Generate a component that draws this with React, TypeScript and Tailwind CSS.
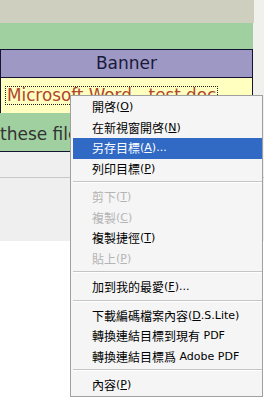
import React from "react";

type Item =
  | { sep: true }
  | {
      sep?: false;
      cjk: string;
      pre?: string;
      key?: string;
      post?: string;
      tail?: string;
      disabled?: boolean;
      active?: boolean;
    };

const items: Item[] = [
  { cjk: "開啓", pre: "(", key: "O", post: ")" },
  { cjk: "在新視窗開啓", pre: "(", key: "N", post: ")" },
  { cjk: "另存目標", pre: "(", key: "A", post: ")...", active: true },
  { cjk: "列印目標", pre: "(", key: "P", post: ")" },
  { sep: true },
  { cjk: "剪下", pre: "(", key: "T", post: ")", disabled: true },
  { cjk: "複製", pre: "(", key: "C", post: ")", disabled: true },
  { cjk: "複製捷徑", pre: "(", key: "T", post: ")" },
  { cjk: "貼上", pre: "(", key: "P", post: ")", disabled: true },
  { sep: true },
  { cjk: "加到我的最愛", pre: "(", key: "F", post: ")..." },
  { sep: true },
  { cjk: "下載編碼檔案內容", pre: "(", key: "D", post: ".S.Lite)" },
  { cjk: "轉換連結目標到現有", tail: " PDF" },
  { cjk: "轉換連結目標爲", tail: " Adobe PDF" },
  { sep: true },
  { cjk: "內容", pre: "(", key: "P", post: ")" },
];

function Menu() {
  return (
    <div
      className="absolute left-[70px] top-[95px] w-[193px] border border-[#a0a0a0] bg-[#f5f5f5] pl-[2px] pt-[1px] pb-[0.5px]"
      style={{ fontFamily: '"DejaVu Sans", "Noto Sans CJK TC", sans-serif' }}
    >
      {items.map((it, i) =>
        it.sep ? (
          <div key={i} className="h-[8px] pt-[2px]">
            <div className="h-px bg-[#c5c5c5]" />
            <div className="h-px bg-white" />
          </div>
        ) : (
          <div
            key={i}
            className={
              "flex h-[20.5px] items-center pl-[19px] whitespace-nowrap " +
              (it.active
                ? "bg-[#316ac5] text-white"
                : it.disabled
                ? "text-[#b4b4b4]"
                : "text-black")
            }
          >
            <span
              className="text-[12px] leading-[12px]"
              style={{ fontFamily: '"Noto Sans CJK TC", sans-serif' }}
            >
              {it.cjk}
            </span>
            <span className="text-[11px] leading-[12px] whitespace-pre">
              {it.pre}
              {it.key ? <u className="underline-offset-1">{it.key}</u> : null}
              {it.post}
              {it.tail}
            </span>
          </div>
        )
      )}
    </div>
  );
}

export default function App() {
  return (
    <div
      className="relative h-[397px] w-[264px] overflow-hidden bg-white"
      style={{ fontFamily: '"DejaVu Sans", sans-serif' }}
    >
      <div className="bg-[#f0f0ec]">
        <div className="h-[23px] w-[254px] bg-[#cfcfc0]" />
        <div className="h-[26px] w-[253px] bg-[#a0d0a0]" />
        <div className="w-[253px] border border-[#141432] bg-[#9e98c4]">
          <div className="flex h-[27px] items-center justify-center text-[17px] text-[#1a1a3c]">
            Banner
          </div>
        </div>
        <div className="flex h-[35px] w-[253px] items-start border-x border-[#141432] bg-[#ffffc0] pl-[4px] pt-[8px]">
          <span className="border border-dotted border-[#202020] px-px text-[16.8px] leading-[17px] text-[#b0452e] whitespace-nowrap">
            Microsoft Word - test.doc
          </span>
        </div>
        <div className="h-[39px] w-[253px] border-b border-[#141432] bg-[#a0d0a0] pt-[11px] text-[17px] leading-[20px] text-[#333333] whitespace-nowrap">
          these files
        </div>
      </div>
      <div className="h-[89px] bg-[#efefef]">
        <div className="h-[25px]" />
        <div className="h-px bg-[#c8c8c8]" />
      </div>
      <Menu />
    </div>
  );
}
